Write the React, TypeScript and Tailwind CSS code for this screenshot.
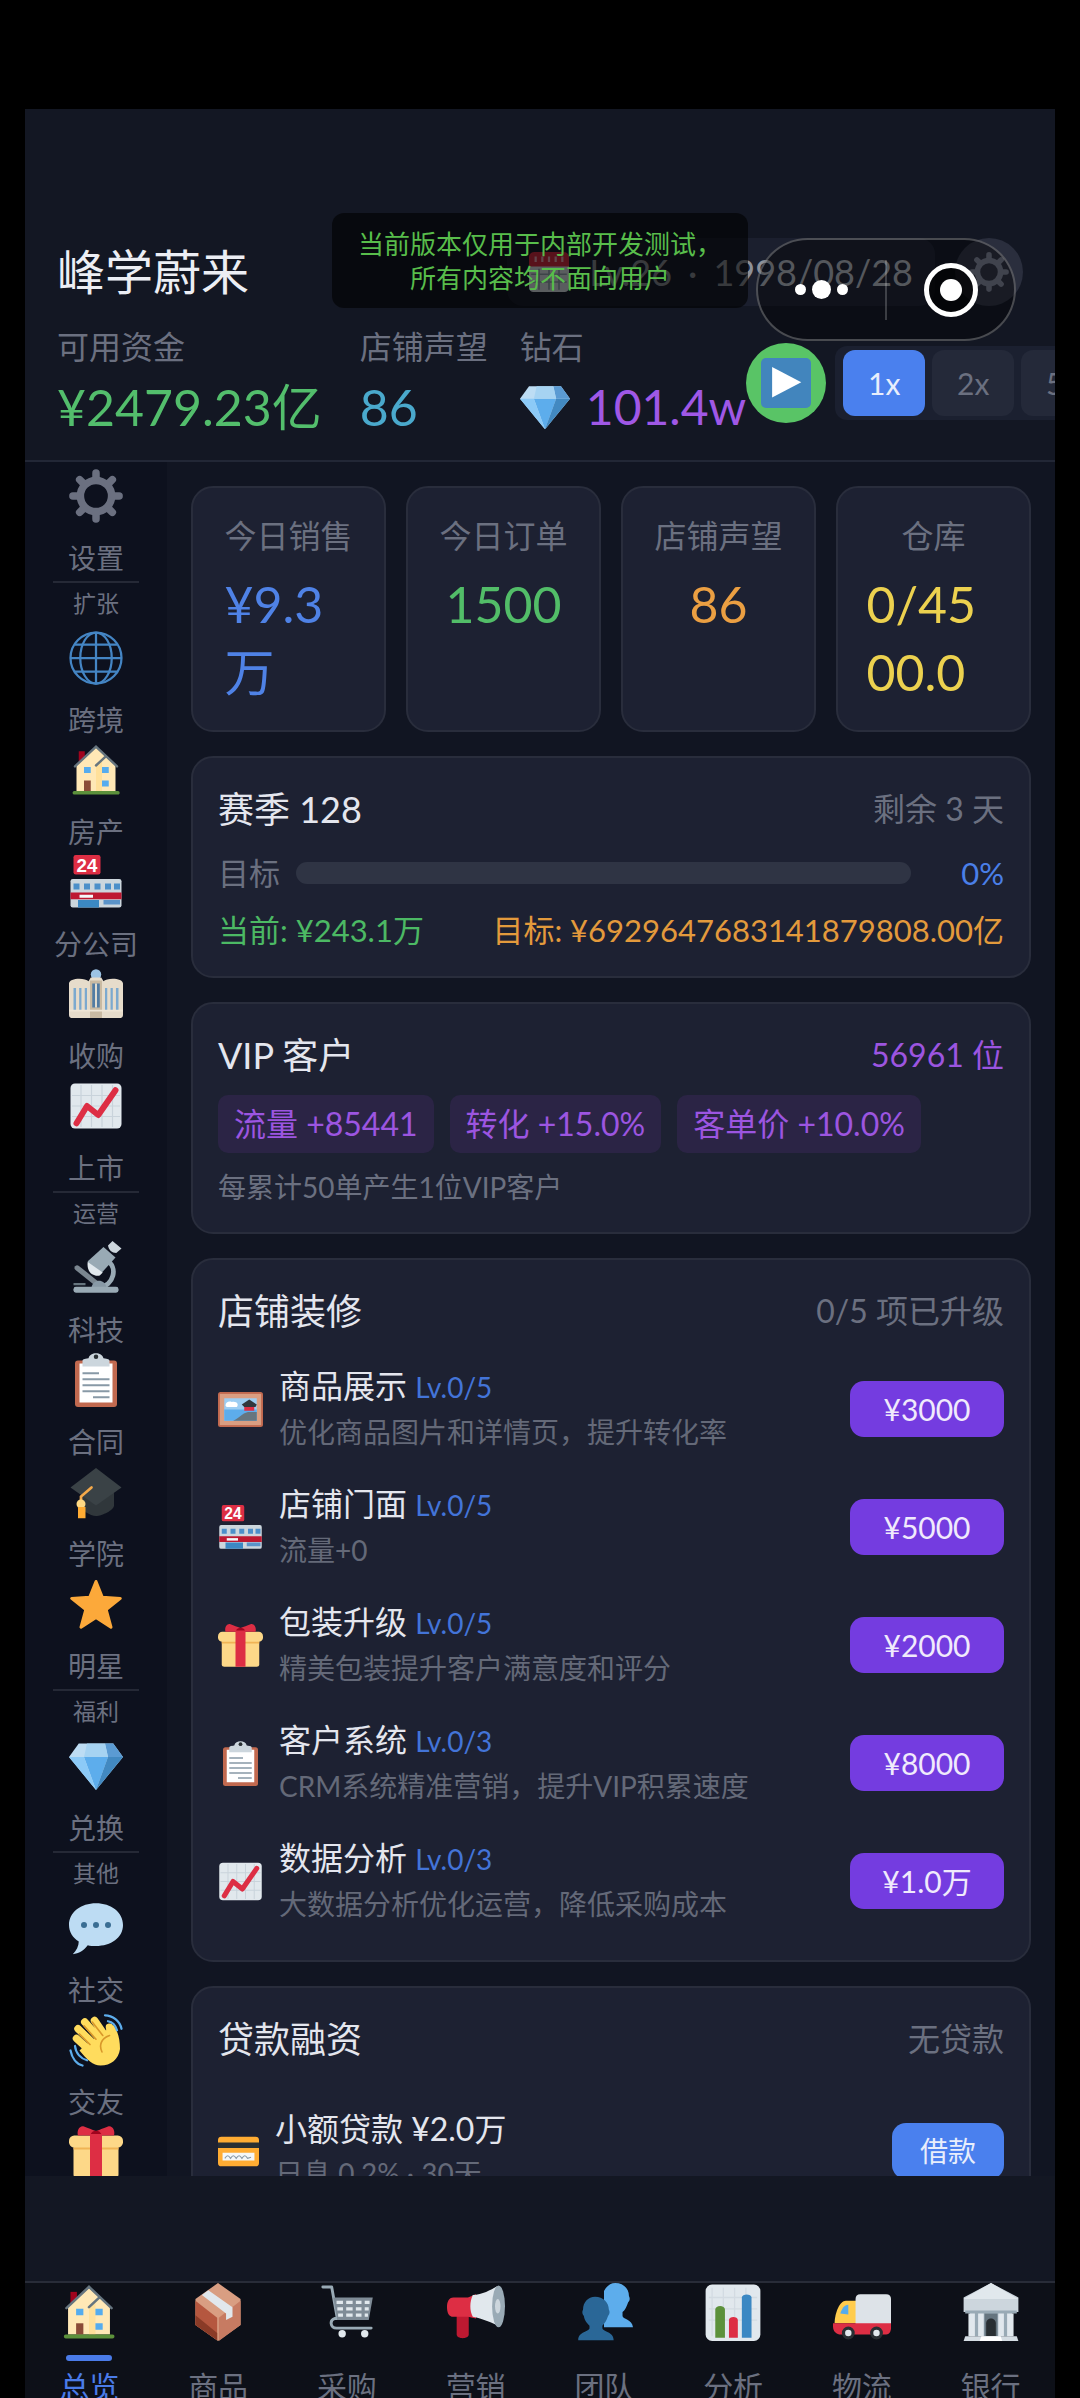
import type { ReactNode } from "react";

const INK = "font-[Lato,'Noto_Sans_CJK_SC',sans-serif]";

function Svg({ children }: { children: ReactNode }) {
  return (
    <svg viewBox="0 0 36 36" className="block h-full w-full" aria-hidden="true">
      {children}
    </svg>
  );
}

const Gear = () => (
  <Svg>
    <g stroke="#6b7080" fill="none">
      <circle cx="18" cy="18" r="10.4" strokeWidth="5" />
      <g strokeWidth="5" strokeLinecap="round">
        <path d="M18 2.6V6M18 30v3.4M2.6 18H6M30 18h3.4M7.1 7.1l2.4 2.4M26.5 26.5l2.4 2.4M7.1 28.9l2.4-2.4M26.5 9.5l2.4-2.4" />
      </g>
    </g>
  </Svg>
);

const Globe = () => (
  <Svg>
    <g fill="none" stroke="#4485c4" strokeWidth="1.5">
      <circle cx="18" cy="18" r="17" />
      <ellipse cx="18" cy="18" rx="10.5" ry="17" />
      <path d="M18 1v34M1 18h34M4 9h28M4 27h28" />
    </g>
  </Svg>
);

const House = () => (
  <Svg>
    <path fill="#a0041e" d="M6.5 5.5h4v7h-4z" />
    <path fill="#ffe8b6" d="M5 15 18 3l13 12v17H5z" />
    <path fill="#ffd983" opacity=".55" d="M18 16l4-4v20h-4z" />
    <path fill="none" stroke="#66757f" strokeWidth="1.6" strokeLinecap="round" d="M4 15.6 18 2.4l14 13.2M18 15l6-5.6" />
    <path fill="#55acee" d="M10 16h4.5v4H10zM22 16h4.5v4H22zM22 25h4.5v4H22z" />
    <path fill="#8a4b38" d="M10 25h4.5v7H10z" />
    <path fill="#5c913b" d="M3.6 32h29c1.6 0 1.6 2.4 0 2.4h-29c-1.6 0-1.6-2.4 0-2.4z" />
  </Svg>
);

const Store = () => (
  <Svg>
    <rect x="3" y="0" width="18" height="13" rx="1.5" fill="#dd2e44" />
    <text x="12" y="11" textAnchor="middle" fontFamily="Liberation Sans" fontWeight="700" fontSize="12.5" fill="#fff">24</text>
    <rect x="1" y="16" width="34" height="19" rx="1.5" fill="#ccd6dd" />
    <path fill="#4c8fc9" d="M3 19h4v4H3zM10 19h4v4h-4zM17 19h4v4h-4zM24 19h4v4h-4zM30 19h4v4h-4z" />
    <path fill="#be1931" d="M1 25h34v4.5H1z" />
    <path fill="#3b88c3" d="M6 30h14v5H6z" />
    <path fill="#5a93c9" d="M23 30h11v3H23z" />
    <path fill="#f5f8fa" d="M7 26.5h9v2H7z" />
  </Svg>
);

const Mall = () => (
  <Svg>
    <circle cx="18" cy="5" r="3.5" fill="#9cc3e4" />
    <path fill="#e6dccb" d="M0 11c0-4 11-4 13-1.5L14.5 7h7L23 9.500C25 7 36 7 36 11v21c0 1.500-1 2-2 2H2c-1 0-2-.5-2-2z" />
    <path fill="#7ba9cf" d="M3 14h1.700v15H3zM6.800 14h1.500v15H6.800zM10.500 14H12v15h-1.500zM24 14h1.500v15H24zM27.700 14h1.500v15h-1.500zM31.300 14H33v15h-1.700z" />
    <path fill="#c9baa2" d="M14 9h8v25h-8z" />
    <path fill="#527ca3" d="M15.500 11h5v16h-5z" />
    <path fill="#efe6d6" d="M0 28.500h36v1.200H0zM17.400 11h1.200v16h-1.200z" />
  </Svg>
);

const ChartUp = () => (
  <Svg>
    <rect x="1" y="3" width="34" height="30" rx="3" fill="#e1e8ed" />
    <path fill="none" stroke="#c9d3db" strokeWidth=".8" d="M8 4v28M15 4v28M22 4v28M29 4v28M2 11h32M2 18h32M2 25h32" />
    <path fill="none" stroke="#dd2e44" strokeWidth="4" strokeLinecap="round" strokeLinejoin="round" d="M5 29.500 12 18l7.500 6L31 7.500" />
  </Svg>
);

const Microscope = () => (
  <Svg>
    <path fill="none" stroke="#99aab5" strokeWidth="3.2" d="M25 13c8 4 5 17-5 18" />
    <path fill="none" stroke="#7a8690" strokeWidth="3.6" strokeLinecap="round" d="M5.500 18 18 28" />
    <path fill="#8899a6" d="M15 31c1-6 9-6 10 0z" />
    <rect x="3" y="30.5" width="30" height="4" rx="1.6" fill="#99aab5" />
    <path fill="#99aab5" d="M12.500 13.500 23 4l8 7-9.500 10.500c-5 .5-9-3-9-8z" />
    <path fill="#e1e8ed" d="m12.500 14 10 7-2 2c-5 1-9-3-8-9z" />
    <path fill="#ccd6dd" d="m26 3 3-3 6 5-3.500 3c-3 0-5-2-5.500-5z" />
    <path fill="#66757f" d="M3 28h8v1.500H3z" />
  </Svg>
);

const Clipboard = () => (
  <Svg>
    <rect x="4" y="5" width="28" height="31" rx="2" fill="#c1694f" />
    <path fill="#fff" d="M7 7h22v26H7z" />
    <path fill="#ccd6dd" d="M9 5.500C9 4 10 4 13 3.500c1-4.500 9-4.500 10 0 3 .5 4 .5 4 2V9H9z" />
    <circle cx="18" cy="2.5" r="1.5" fill="#292f33" />
    <path stroke="#8899a6" strokeWidth="1.2" d="M9 13.500h11M9 17.500h18M9 21.500h18M9 25.500h18M16 29.500h11" />
  </Svg>
);

const Cap = () => (
  <Svg>
    <path fill="#30373b" d="M8 17h22v10c0 3-8 7-12 7S8 30 8 27z" />
    <path fill="#3a4246" d="M18 2 35 15 18 27 1 15z" />
    <path fill="none" stroke="#f4a94a" strokeWidth="1.8" strokeLinecap="round" d="m15 15-7 6v4" />
    <circle cx="8" cy="26" r="3" fill="#ffd983" />
    <path fill="#ffac33" d="M6 28h5v7.500H6z" />
  </Svg>
);

const Star = () => (
  <Svg>
    <path
      fill="#fca93a"
      stroke="#fca93a"
      strokeWidth="2"
      strokeLinejoin="round"
      d="m18 3 4.200 10.500 12 .8-9.400 7.500 3.200 11.700L18 27l-10 6.500 3.200-11.700-9.400-7.500 12-.8z"
    />
  </Svg>
);

const Diamond = () => (
  <Svg>
    <path fill="#bdddf4" d="M0 12 6.500 3h23l6.500 9-18 22z" />
    <path fill="#5dadec" d="M10 12h16l-8 22z" />
    <path fill="#4289c1" d="M26 12h10L18 34z" />
    <path fill="#5b9bd3" d="m29.500 3 6.500 9H26l-2-9z" />
    <path fill="#8ccaf7" d="M0 12h10l8 22z" />
    <path fill="#a6d3f2" d="M12 3h12l2 9H10z" />
  </Svg>
);

const Bubble = () => (
  <Svg>
    <path fill="#bddcf3" d="M18 1.500c10 0 18 6 18 14.500s-8 14-18 14c-2 0-4 0-5.500-.5C10 33 6.500 35 2.500 35.500 5 33 6.500 30 6.500 27 2.500 24.500 0 20.500 0 16 0 7.500 8 1.500 18 1.500z" />
    <g fill="#3b6e93">
      <circle cx="10" cy="16" r="2" />
      <circle cx="18" cy="16" r="2" />
      <circle cx="26" cy="16" r="2" />
    </g>
  </Svg>
);

const Wave = () => (
  <Svg>
    <g fill="none" stroke="#ffdc5d" strokeLinecap="round" strokeWidth="5">
      <path d="m5 17 11 10M6 10.500 19 23M10.500 6 22 19M17 5l9 13M27 9.500 29 20" />
    </g>
    <path fill="#ffdc5d" d="M10 22 23 13l6.500-5c3 4 4.500 9 4.500 16-1 7-6 11-13 11-5 0-9-4-14-10z" />
    <path fill="none" stroke="#d9982b" strokeWidth="1.1" strokeLinecap="round" d="m7 14 7 7M10 8.500l8 9M15.500 6l7 9M27 15c-6 2-7 7-5 11" />
    <path fill="none" stroke="#5dadec" strokeWidth="1.5" strokeLinecap="round" d="M24 1.500c5 0 10 4 11 9M26 5.500c3 .5 5 2.500 6 6M1 25c1 5 4 9 8 10M4 22c.5 5 4 8.500 8 9.500" />
  </Svg>
);

const Gift = () => (
  <Svg>
    <path fill="#fdd888" d="M3 14h30v19c0 1.500-1 2-2 2H5c-1 0-2-.5-2-2z" />
    <rect x="0" y="7" width="36" height="8" rx="3.5" fill="#fdd888" />
    <path fill="#f0b455" d="M3 15h30v1.300H3z" />
    <path fill="#dd2e44" d="M14 6h8v29h-8z" />
    <path fill="#dd2e44" d="M18 7C14 7 9 7 6 7c-1-3 1-7 4-6s5 2 8 3c3-1 5-2 8-3s5 3 4 6c-3 0-8 0-12 0z" />
    <path fill="#a0041e" d="M14.500 6c1-3 6-3 7 0z" />
  </Svg>
);

const Picture = () => (
  <Svg>
    <rect x="0" y="4" width="36" height="28" rx="2" fill="#c1694f" />
    <rect x="1.5" y="5.5" width="33" height="25" fill="#d99e82" />
    <path fill="#9ccdf2" d="M5 9h26v18H5z" />
    <path fill="#5dadec" d="M5 18h26v9H5z" />
    <path fill="#fff" d="M6 15c0-3 3-4 5-3 4-1 6 2 4 4H7z" />
    <path fill="#66757f" d="M12 27c5-2 7-6 12-7h7v7z" />
    <path fill="#dd2e44" d="M21 15h8v4h-8z" />
    <path fill="#31373d" d="m19 14 6-4 6 4-1 2h-9z" />
  </Svg>
);

const Card = () => (
  <Svg>
    <rect x="0" y="5" width="36" height="26" rx="3" fill="#ffac33" />
    <path fill="#292f33" d="M0 10h36v5H0z" />
    <path fill="#f4f7f9" d="M4 19h28v7H4z" />
    <path fill="none" stroke="#8899a6" d="M6 24c2-3 3-3 5 0 2-3 3-3 5 0 2-3 3-3 5 0 2-3 3-3 5 0l3-1" />
  </Svg>
);

const Package = () => (
  <Svg>
    <path fill="#d99e82" d="M18 0 32 10v16L18 36 4 26V10z" />
    <path fill="#b5573f" d="M4 11 17.500 21.500V35.500L4 26z" />
    <path fill="#8a3b27" d="M4 20 17.500 31v4.500L4 26z" />
    <path fill="#c77b62" d="M18.500 21.500 32 11v15L18.500 36z" />
    <path fill="#e1e8ed" d="m8 7.500 4-3L27 15v6l-4 2v-4z" />
  </Svg>
);

const Cart = () => (
  <Svg>
    <path fill="none" stroke="#99aab5" strokeWidth="1.8" strokeLinecap="round" strokeLinejoin="round" d="M3 2.500h5.500L12 22H10.500c-3.500 1-3 6 1 6H33" />
    <path fill="#7f8c97" d="M9.500 9H34l-2.500 14H12z" />
    <path fill="#e1e8ed" d="M11.500 11h4v2h-4zM17.500 11h4v2h-4zM23.500 11h3.500v2h-3.500zM29 11h3v2h-3zM12 15h3.500v2H12zM17.500 15h4v2h-4zM23.500 15h3.500v2h-3.500zM29 15h2.500v2H29zM12.500 19h3v2h-3zM17.500 19h4v2h-4zM23.500 19h3.500v2h-3.500zM29 19h2v2h-2z" />
    <circle cx="15" cy="31.5" r="2.3" fill="#e1e8ed" />
    <circle cx="29" cy="31.5" r="2.3" fill="#e1e8ed" />
  </Svg>
);

const Megaphone = () => (
  <Svg>
    <path fill="#be1931" d="M6 19h7.500v13c0 3-7.500 3-7.500 0z" />
    <path fill="#dd2e44" d="M4 9h9l5-2v15l-5-1H4c-3 0-4-3-4-6s1-6 4-6z" />
    <path fill="#e1e8ed" d="M16 7.500C22 7 27 4.500 31 2l2 25c-5-2-11-5-17-6-2-4-2-9 0-13.500z" />
    <ellipse cx="32" cy="14.5" rx="4" ry="13" fill="#99aab5" />
    <ellipse cx="31.5" cy="14.5" rx="1.7" ry="4.5" fill="#ccd6dd" />
  </Svg>
);

const Team = () => (
  <Svg>
    <path fill="#5dadec" d="M25 0c5 0 8.500 3.500 8.500 8 .8 1.500.5 3-.5 4-1 3-2 5-3.500 6v2.500c0 2 6 2 6.500 7H18V5c1.500-3 4-5 7-5z" />
    <path fill="#2a6797" d="M12.500 8.500c5 0 8.500 3.500 8.500 8 .8 1.500.5 3-.5 4-1 3-2 4.500-3.500 6V28c0 2.500 7 2 7 7.500H2C2 30 9 30.500 9 28v-1.500c-1.500-1.500-3-3-3.500-6-1-1-1.300-2.500-.5-4 0-4.500 3-8 7.500-8z" />
  </Svg>
);

const Bars = () => (
  <Svg>
    <rect x="1" y="1" width="34" height="35" rx="4" fill="#e1e8ed" />
    <path fill="none" stroke="#d3dbe2" strokeWidth=".8" d="M5 3v30M12 3v30M19 3v30M26 3v30M3 9h30M3 16h30M3 23h30" />
    <path fill="#5c913b" d="M7 34V16.500c0-3 6-3 6 0V34z" />
    <path fill="#dd2e44" d="M15.500 34V23c0-2.500 5.500-2.500 5.500 0v11z" />
    <path fill="#3b88c3" d="M23.500 34V9c0-2.500 6-2.500 6 0v25z" />
  </Svg>
);

const Truck = () => (
  <Svg>
    <path fill="#ffcc4d" d="M15 11H8c-4 0-7 8-7 14h14z" />
    <path fill="#55acee" d="M4.500 19c1-3 2.500-5.500 5-5.500v6z" />
    <path fill="#dde3e8" d="M14 10c0-2 1-3 3-3h16c2 0 3 1 3 3v16H14z" />
    <path fill="#dd2e44" d="M0 25h36v3c0 2-1 4-3 4H5c-3 0-5-2-5-5z" />
    <g fill="#e1e8ed" stroke="#292f33" strokeWidth="2">
      <circle cx="9.5" cy="31" r="3" />
      <circle cx="27" cy="31" r="3" />
    </g>
  </Svg>
);

const Bank = () => (
  <Svg>
    <path fill="#ccd6dd" d="m18 0 17 9v9H1V9z" />
    <path fill="#e1e8ed" d="M18 0 35 10H1z" />
    <path fill="#99aab5" d="M2 17h32v2H2zM5 19h26v14H5z" />
    <path fill="#e1e8ed" d="M4 19h4v14H4zM10 19h3.500v14H10zM22.500 19H26v14h-3.500zM28 19h4v14h-4z" />
    <path fill="#66757f" d="M14 19h8v14h-8z" />
    <path fill="#292f33" d="M15 25c0-4 6-4 6 0v8h-6z" />
    <path fill="#d5dde3" d="M2 33h32l1 3H1z" />
    <path fill="#fff" d="M12 33h12l1 3H11z" />
  </Svg>
);

const Calendar = () => (
  <Svg>
    <rect x="0" y="2" width="36" height="34" rx="4" fill="#e1e8ed" />
    <path fill="#dd2e44" d="M0 13V5c0-3 2-5 5-5h26c3 0 5 2 5 5v8z" />
    <path fill="none" stroke="#99aab5" strokeWidth="1.5" d="M9 15v19M18 15v19M27 15v19M2 20h32M2 27h32" />
    <path stroke="#f4abba" strokeWidth="2" d="M6 4v5M12 4v5M18 4v5M24 4v5M30 4v5" />
  </Svg>
);

type Entry = { label: string; Icon: () => ReactNode };

const sideGroups: { title?: string; items: Entry[] }[] = [
  { items: [{ label: "设置", Icon: Gear }] },
  {
    title: "扩张",
    items: [
      { label: "跨境", Icon: Globe },
      { label: "房产", Icon: House },
      { label: "分公司", Icon: Store },
      { label: "收购", Icon: Mall },
      { label: "上市", Icon: ChartUp },
    ],
  },
  {
    title: "运营",
    items: [
      { label: "科技", Icon: Microscope },
      { label: "合同", Icon: Clipboard },
      { label: "学院", Icon: Cap },
      { label: "明星", Icon: Star },
    ],
  },
  { title: "福利", items: [{ label: "兑换", Icon: Diamond }] },
  {
    title: "其他",
    items: [
      { label: "社交", Icon: Bubble },
      { label: "交友", Icon: Wave },
      { label: "礼包", Icon: Gift },
    ],
  },
];

const stats = [
  { label: "今日销售", value: "¥9.3万", tone: "w-32 text-[#4f82e6]" },
  { label: "今日订单", value: "1500", tone: "text-[#52bd68]" },
  { label: "店铺声望", value: "86", tone: "text-[#eb9f42]" },
  { label: "仓库", value: "0/4500.0", tone: "w-[134px] break-all text-[#ecd14f]" },
];

const upgrades = [
  { name: "商品展示", level: "Lv.0/5", note: "优化商品图片和详情页，提升转化率", price: "¥3000", Icon: Picture },
  { name: "店铺门面", level: "Lv.0/5", note: "流量+0", price: "¥5000", Icon: Store },
  { name: "包装升级", level: "Lv.0/5", note: "精美包装提升客户满意度和评分", price: "¥2000", Icon: Gift },
  { name: "客户系统", level: "Lv.0/3", note: "CRM系统精准营销，提升VIP积累速度", price: "¥8000", Icon: Clipboard },
  { name: "数据分析", level: "Lv.0/3", note: "大数据分析优化运营，降低采购成本", price: "¥1.0万", Icon: ChartUp },
];

const tabs: Entry[] = [
  { label: "总览", Icon: House },
  { label: "商品", Icon: Package },
  { label: "采购", Icon: Cart },
  { label: "营销", Icon: Megaphone },
  { label: "团队", Icon: Team },
  { label: "分析", Icon: Bars },
  { label: "物流", Icon: Truck },
  { label: "银行", Icon: Bank },
];

function Panel({ title, aside, asideTone, children }: { title: string; aside: string; asideTone: string; children: ReactNode }) {
  return (
    <section className="rounded-[22px] border-2 border-[#292d3c] bg-[#1d2132] px-[25px] pt-[26px] pb-6">
      <div className="flex items-center justify-between">
        <h2 className="text-[36px] leading-[50px] text-[#e4e6ee]">{title}</h2>
        <span className={`text-[32px] leading-[50px] ${asideTone}`}>{aside}</span>
      </div>
      {children}
    </section>
  );
}

function Header() {
  return (
    <header className="shrink-0 border-b-2 border-[#222736] px-8 pt-[129px] pb-[21px]">
      <div className="flex h-[68px] items-center">
        <h1 className="text-[48px] leading-[64px] text-[#eceef4]">峰学蔚来</h1>
        <div className="ml-auto flex h-[68px] items-center rounded-[16px] bg-[#1b1f2e] px-[22px] text-[36px] text-[#8d919a]">
          <span className="mr-5 size-10"><Calendar /></span>
          <span>Lv.26</span>
          <span className="mx-4">·</span>
          <span>1998/08/28</span>
        </div>
        <button aria-label="设置" className="ml-5 size-[68px] rounded-full bg-[#2a2e3d] p-[14px]">
          <Gear />
        </button>
      </div>
      <div className="mt-[19px] flex">
        <dl className="flex shrink-0 gap-8 text-[32px]">
          <div className="pr-[6px]">
            <dt className="leading-[44px] text-[#6b7080]">可用资金</dt>
            <dd className="mt-[6px] text-[50px] leading-[64px] text-[#53be6c]">¥2479.23亿</dd>
          </div>
          <div>
            <dt className="leading-[44px] text-[#6b7080]">店铺声望</dt>
            <dd className="mt-[6px] text-[50px] leading-[64px] text-[#4aa9cc]">86</dd>
          </div>
          <div>
            <dt className="leading-[44px] text-[#6b7080]">钻石</dt>
            <dd className="mt-[6px] flex items-center gap-4 text-[48px] leading-[64px] text-[#a058e6]">
              <span className="size-[50px]"><Diamond /></span>101.4w
            </dd>
          </div>
        </dl>
        <div className="mt-[18px] flex h-20 shrink-0 items-center">
          <button aria-label="播放" className="flex size-20 items-center justify-center rounded-full bg-[#59c466]">
            <span className="size-[50px] rounded-[5px] bg-[#4285bd]">
              <Svg><path fill="#fff" d="M8 6.500 29 17.500 8 28.500z" /></Svg>
            </span>
          </button>
          <div className="ml-[9px] flex gap-[7px] rounded-[12px] bg-[#1b2030] px-2 py-1 text-[30px]">
            <button className="h-[66px] w-[82px] rounded-[12px] bg-[#4a80ee] text-[#e8eefc]">1x</button>
            <button className="h-[66px] w-[82px] rounded-[12px] bg-[#242939] text-[#6b7080]">2x</button>
            <button className="h-[66px] w-[82px] rounded-[12px] bg-[#242939] text-[#6b7080]">5x</button>
          </div>
        </div>
      </div>
    </header>
  );
}

function Sidebar() {
  return (
    <aside className="w-[142px] shrink-0 overflow-hidden bg-[#0d111e] pt-[7px] text-[#6b7080]">
      {sideGroups.map((group) => (
        <div key={group.items[0].label}>
          {group.title && (
            <div className="mx-auto mb-[6px] h-[44px] w-[86px] border-t-2 border-[#252936] text-center text-[23px] leading-[40px]">
              {group.title}
            </div>
          )}
          {group.items.map(({ label, Icon }) => (
            <button key={label} className="flex h-28 w-full flex-col items-center text-[28px] leading-[38px]">
              <span className="mb-4 size-[54px]"><Icon /></span>
              {label}
            </button>
          ))}
        </div>
      ))}
    </aside>
  );
}

export default function App() {
  return (
    <div className={`h-screen overflow-hidden bg-black px-[25px] pt-[109px] ${INK}`}>
      <div className="relative flex h-full flex-col overflow-hidden bg-[#131723]">
        <Header />

        <div className="flex min-h-0 flex-1 overflow-hidden">
          <Sidebar />
          <main className="flex min-w-0 flex-1 flex-col gap-6 overflow-hidden bg-[#111522] px-6 pt-6 *:shrink-0">
            <div className="grid grid-cols-4 gap-5">
              {stats.map((s) => (
                <div key={s.label} className="flex flex-col items-center rounded-[22px] border-2 border-[#292d3c] bg-[#1d2132] px-6 pt-[26px] pb-6">
                  <span className="text-[32px] leading-[44px] whitespace-nowrap text-[#6b7080]">{s.label}</span>
                  <span className={`mt-3 text-[50px] leading-[68px] ${s.tone}`}>{s.value}</span>
                </div>
              ))}
            </div>

            <Panel title="赛季 128" aside="剩余 3 天" asideTone="text-[#6b7080]">
              <div className="mt-[17px] flex items-center text-[31px] leading-[44px]">
                <span id="goal" className="text-[#6b7080]">目标</span>
                <div role="progressbar" aria-labelledby="goal" aria-valuenow={0} className="mr-[50px] ml-4 h-[22px] flex-1 rounded-full bg-[#2f3444]" />
                <span className="text-[#4a7fe8]">0%</span>
              </div>
              <div className="mt-[13px] flex justify-between text-[31px] leading-[44px] whitespace-nowrap">
                <span className="text-[#4cb964]">当前: ¥243.1万</span>
                <span className="text-[#e39a3c]">目标: ¥6929647683141879808.00亿</span>
              </div>
            </Panel>

            <Panel title="VIP 客户" aside="56961 位" asideTone="text-[#9c55e0]">
              <div className="mt-[15px] flex gap-4 text-[32px] leading-[58px] text-[#9c55e0]">
                {["流量 +85441", "转化 +15.0%", "客单价 +10.0%"].map((t) => (
                  <span key={t} className="rounded-[10px] bg-[#2b2445] px-4">{t}</span>
                ))}
              </div>
              <p className="mt-[13px] text-[28px] leading-[42px] text-[#6b7080]">每累计50单产生1位VIP客户</p>
            </Panel>

            <Panel title="店铺装修" aside="0/5 项已升级" asideTone="text-[#6b7080]">
              <ul className="mt-[14px] -mb-1">
                {upgrades.map(({ name, level, note, price, Icon }) => (
                  <li key={name} className="flex h-[118px] items-center">
                    <span className="mr-4 size-[45px] shrink-0"><Icon /></span>
                    <div className="flex-1">
                      <div className="text-[32px] leading-[45px] text-[#e4e6ee]">
                        {name} <span className="text-[28px] text-[#4374d8]">{level}</span>
                      </div>
                      <div className="text-[28px] leading-[45px] text-[#646978]">{note}</div>
                    </div>
                    <button className="h-14 w-[154px] rounded-[14px] bg-[#743ce0] text-[30px] text-[#f0eafc]">{price}</button>
                  </li>
                ))}
              </ul>
            </Panel>

            <Panel title="贷款融资" aside="无贷款" asideTone="text-[#6b7080]">
              <div className="mt-[28px] flex h-[118px] items-center">
                <span className="mr-4 size-[41px] shrink-0"><Card /></span>
                <div className="flex-1">
                  <div className="text-[32px] leading-[45px] text-[#e4e6ee]">小额贷款 ¥2.0万</div>
                  <div className="text-[28px] leading-[45px] text-[#646978]">日息 0.2% · 30天</div>
                </div>
                <button className="h-14 w-[112px] rounded-[14px] bg-[#4a80ee] text-[28px] text-[#e8eefc]">借款</button>
              </div>
            </Panel>
          </main>
        </div>

        <nav className="mt-[105px] flex h-[117px] shrink-0 overflow-hidden border-t-2 border-[#282c38] bg-[#0d1018]">
          {tabs.map(({ label, Icon }, i) => (
            <a
              key={label}
              href={`#${label}`}
              className={`flex flex-1 flex-col items-center text-[30px] leading-[42px] ${i === 0 ? "text-[#4a7be8]" : "text-[#6b7080]"}`}
            >
              <span className="size-[58px] shrink-0"><Icon /></span>
              <span className={`mt-[14px] mb-1 h-[6px] w-[46px] shrink-0 rounded-full ${i === 0 ? "bg-[#4a7be8]" : "bg-transparent"}`} />
              {label}
            </a>
          ))}
        </nav>

        <div className="absolute top-[104px] left-1/2 h-[95px] w-[416px] -translate-x-1/2 rounded-[12px] bg-black/60 pt-[14px] text-center text-[26px] leading-[34px] text-[#58bd4b]">
          当前版本仅用于内部开发测试，
          <br />
          所有内容均不面向用户
        </div>

        <div className="absolute top-[129px] right-[39px] flex h-[103px] w-[260px] items-center rounded-full border-2 border-white/25 bg-black/40">
          <button aria-label="更多" className="flex flex-1 items-center justify-center gap-[6px]">
            <span className="size-[11px] rounded-full bg-white" />
            <span className="size-[19px] rounded-full bg-white" />
            <span className="size-[11px] rounded-full bg-white" />
          </button>
          <span className="h-[60px] w-[2px] bg-white/20" />
          <button aria-label="关闭" className="flex flex-1 items-center justify-center">
            <span className="flex size-[54px] items-center justify-center rounded-full border-[5px] border-white bg-black/60">
              <span className="size-[22px] rounded-full bg-white" />
            </span>
          </button>
        </div>
      </div>
    </div>
  );
}
